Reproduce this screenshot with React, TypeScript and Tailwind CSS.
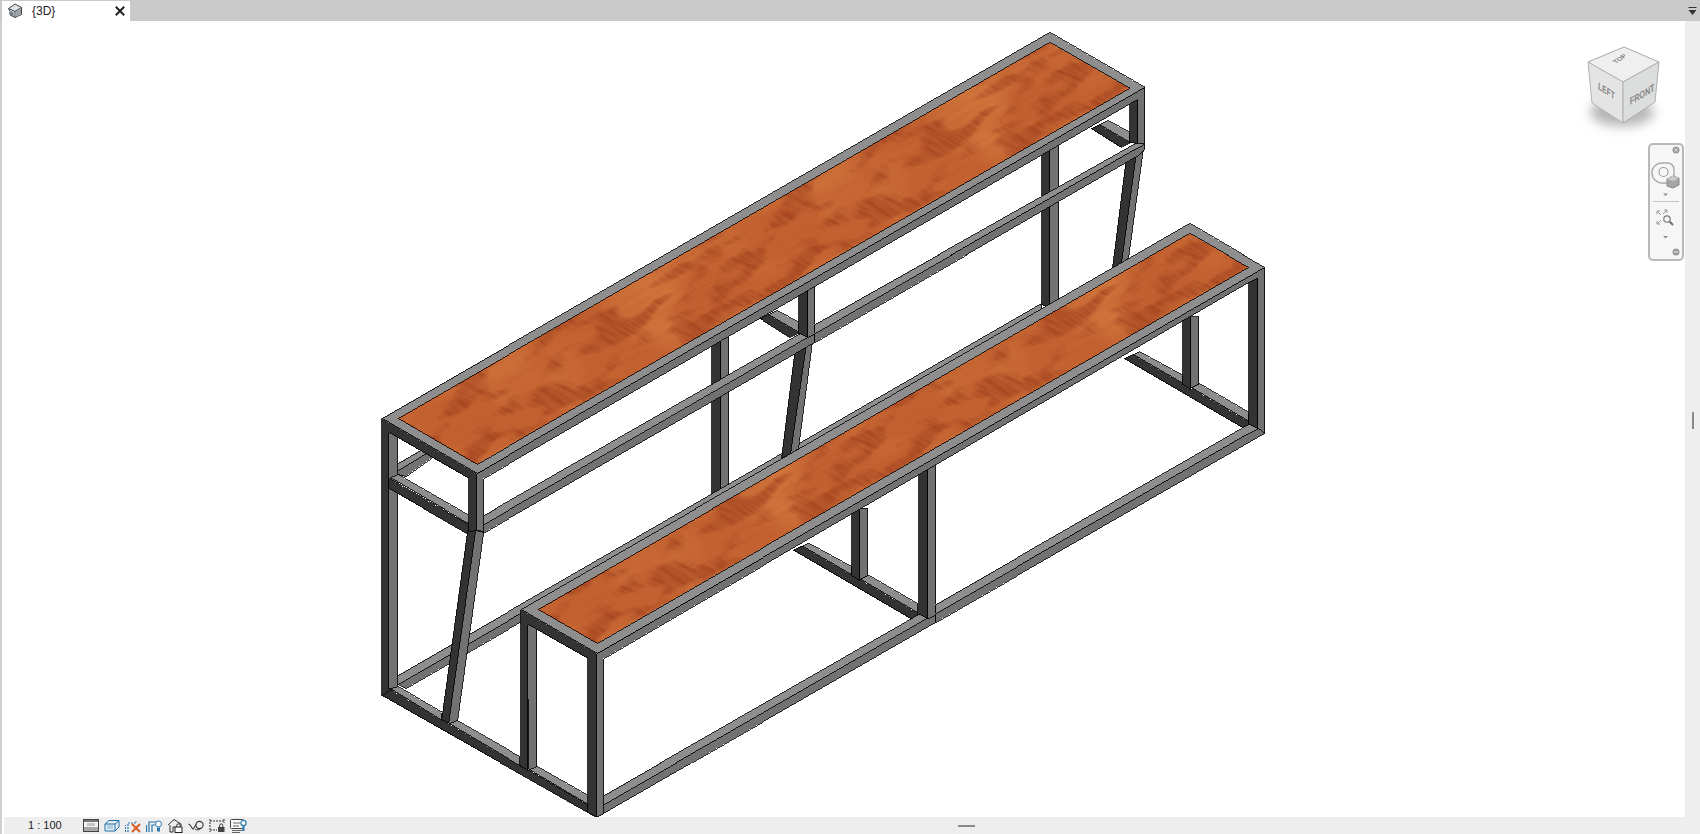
import React from 'react';

const LIGHT = '#8e8e8e';
const MID = '#727272';
const DARK = '#333333';

const railTop = (x: number) => 515 - (x - 483) * 0.576;
const backTop = (x: number) => 675 - (x - 397) * 0.578;
const baseTop = (x: number) => 795 - (x - 603.3) * 0.575;

type Pt = [number, number];

// snap to the pixel grid so neighbouring faces share one black line
const Face = ({ pts, fill }: { pts: Pt[]; fill: string }) => (
  <polygon
    points={pts.map((p) => `${Math.round(p[0]) + 0.5},${Math.round(p[1]) + 0.5}`).join(' ')}
    fill={fill}
    stroke="#000"
    strokeWidth={0.8}
    shapeRendering="crispEdges"
  />
);

// upper cross rail + lower cross rail get reused for the middle frame
const UpperCross = () => (
  <>
    <Face fill={DARK} pts={[[1090, 128.3], [1098.3, 124.3], [1129, 142], [1120, 147]]} />
    <Face fill={LIGHT} pts={[[1098.3, 124], [1106.7, 120], [1129, 131.7], [1129, 141.5]]} />
  </>
);

const LowerCross = () => (
  <>
    <Face fill={DARK} pts={[[1123.3, 358.3], [1131.7, 354], [1248.3, 421], [1248.3, 431]]} />
    <Face fill={LIGHT} pts={[[1131.7, 354], [1138, 351], [1181.7, 375], [1181.7, 382.7]]} />
    <Face fill={LIGHT} pts={[[1190, 386.7], [1197.7, 383.3], [1248.3, 411.7], [1248.3, 420.7]]} />
    <Face fill={DARK} pts={[[1181.7, 316], [1190, 316], [1190, 389], [1181.7, 384]]} />
    <Face fill={MID} pts={[[1190, 316], [1197.7, 316], [1197.7, 383.3], [1190, 386.7]]} />
  </>
);

const WoodDefs = () => (
  <defs>
    <filter id="plaid" x="0" y="0" width="1" height="1" colorInterpolationFilters="sRGB">
      <feTurbulence type="fractalNoise" baseFrequency="0.2 0.03" numOctaves={2} seed={7} stitchTiles="stitch" result="fine" />
      <feColorMatrix in="fine" values="0 0 0 0 0.66  0 0 0 0 0.28  0 0 0 0 0.13  2.8 0 0 0 -1.05" result="streak" />
      <feTurbulence type="fractalNoise" baseFrequency="0.022 0.05" numOctaves={2} seed={12} stitchTiles="stitch" result="big" />
      <feColorMatrix in="big" values="0 0 0 0 0  0 0 0 0 0  0 0 0 0 0  5.5 0 0 0 -2.6" result="mask" />
      <feComposite in="streak" in2="mask" operator="in" />
    </filter>
    <filter id="blotches" x="0" y="0" width="1" height="1" colorInterpolationFilters="sRGB">
      <feTurbulence type="fractalNoise" baseFrequency="0.022 0.05" numOctaves={2} seed={12} stitchTiles="stitch" />
      <feColorMatrix values="0 0 0 0 0.68  0 0 0 0 0.31  0 0 0 0 0.15  5 0 0 0 -2.4" />
    </filter>
    <filter id="glow" x="0" y="0" width="1" height="1" colorInterpolationFilters="sRGB">
      <feTurbulence type="fractalNoise" baseFrequency="0.012 0.02" numOctaves={2} seed={31} stitchTiles="stitch" />
      <feColorMatrix values="0 0 0 0 0.81  0 0 0 0 0.45  0 0 0 0 0.23  3.4 0 0 0 -1.5" />
    </filter>
    <filter id="lines" x="0" y="0" width="1" height="1" colorInterpolationFilters="sRGB">
      <feTurbulence type="fractalNoise" baseFrequency="0.012 0.4" numOctaves={1} seed={3} stitchTiles="stitch" />
      <feColorMatrix values="0 0 0 0 0.68  0 0 0 0 0.31  0 0 0 0 0.15  1.6 0 0 0 -0.75" />
    </filter>
    <pattern id="woodTop" patternUnits="userSpaceOnUse" width={376} height={120} patternTransform="matrix(0.866 -0.5 -0.866 -0.5 476 464)">
      <WoodTile />
    </pattern>
    <pattern id="woodLow" patternUnits="userSpaceOnUse" width={376} height={120} patternTransform="matrix(0.866 -0.5 -0.866 -0.5 596 643)">
      <WoodTile />
    </pattern>
  </defs>
);

const WoodTile = () => (
  <>
    <rect width={376} height={120} fill="#c36230" />
    <rect width={376} height={120} filter="url(#glow)" />
    <rect width={376} height={120} filter="url(#blotches)" opacity={0.65} />
    <rect width={376} height={120} filter="url(#plaid)" />
    <rect width={376} height={120} filter="url(#lines)" opacity={0.4} />
    <ellipse cx={300} cy={36} rx={32} ry={11} fill="none" stroke="#ad5227" strokeWidth={1} opacity={0.6} />
    <ellipse cx={302} cy={36} rx={20} ry={6} fill="none" stroke="#b55a2a" strokeWidth={1} opacity={0.45} />
    <path d="M90 22 q26 -8 48 2" fill="none" stroke="#ad5227" strokeWidth={1} opacity={0.6} />
  </>
);

const Bench = () => (
  <svg viewBox="2 21 1683 796" width={1683} height={796} className="block">
    <WoodDefs />

    {/* back of the upper frame */}
    <Face fill={DARK} pts={[[711, 280], [720, 280], [720, 500], [711, 500]]} />
    <Face fill={MID} pts={[[720, 280], [727.7, 280], [727.7, 500], [720, 500]]} />
    <Face fill={LIGHT} pts={[[397, backTop(397)], [1041, backTop(1041)], [1041, backTop(1041) + 9], [397, backTop(397) + 9]]} />
    <Face fill={MID} pts={[[397, backTop(397) + 9], [1041, backTop(1041) + 9], [1041, backTop(1041) + 18], [405, backTop(405) + 18]]} />
    <Face fill={DARK} pts={[[1041, 140], [1049.3, 140], [1049.3, 309], [1041, 304]]} />
    <Face fill={MID} pts={[[1049.3, 140], [1057.7, 140], [1057.7, 305], [1049.3, 309]]} />
    <Face fill={LIGHT} pts={[[396.7, 463.3], [440, 438.3], [440, 444], [396.7, 469.5]]} />
    <Face fill={MID} pts={[[396.7, 469.5], [440, 444], [440, 451], [405, 476], [396.7, 474]]} />

    {/* tapered legs, middle and far */}
    <Face fill={DARK} pts={[[795, 345], [805.5, 342], [790, 453], [781, 457]]} />
    <Face fill={MID} pts={[[805.5, 342], [812.3, 340], [798.3, 447], [790, 453]]} />
    <Face fill={DARK} pts={[[1125.7, 155], [1135.7, 150], [1120.7, 262], [1111.7, 267]]} />
    <Face fill={MID} pts={[[1135.7, 150], [1143.3, 147], [1128.3, 257], [1120.7, 262]]} />

    {/* long middle rail, left half */}
    <Face fill={LIGHT} pts={[[476, railTop(476)], [806.7, railTop(806.7)], [806.7, railTop(806.7) + 9], [476, railTop(476) + 9]]} />
    <Face fill={MID} pts={[[476, railTop(476) + 9], [814.3, railTop(814.3) + 9], [814.3, railTop(814.3) + 17.5], [482, railTop(482) + 17.5]]} />

    <g transform="translate(-331 190)">
      <UpperCross />
    </g>
    <UpperCross />

    {/* middle frame post */}
    <Face fill={DARK} pts={[[798.3, 285], [806.7, 285], [806.7, 337], [798.3, 333]]} />
    <Face fill={MID} pts={[[806.7, 285], [814.3, 285], [814.3, 333], [806.7, 337]]} />
    <Face fill={DARK} pts={[[1129.3, 95], [1137.3, 95], [1137.3, 143], [1129.3, 142]]} />

    {/* upper top */}
    <Face fill={MID} pts={[[388.3, 431.5], [396.7, 436.5], [396.7, 686], [388.3, 688.5]]} />
    <Face fill={MID} pts={[[476, 473], [1144.3, 87], [1144.3, 148], [1137.3, 148], [1137.3, 98.5], [483.3, 478], [483.3, 531], [476, 529.5]]} />

    {/* long middle rail, right half */}
    <Face fill={LIGHT} pts={[[814.3, railTop(814.3)], [1135, 142.5], [1144.3, 143], [1135.7, railTop(1135.7) + 9], [814.3, railTop(814.3) + 9]]} />
    <Face fill={MID} pts={[[814.3, railTop(814.3) + 9], [1135.7, railTop(1135.7) + 9], [1144.3, 143], [1143.5, 148], [1135.7, 156], [814.3, railTop(814.3) + 17.5]]} />

    <Face fill={DARK} pts={[[381, 418], [476, 473], [476, 532], [468.3, 532], [468.3, 477.5], [388.3, 431.5], [388.3, 688], [396, 695], [381, 695]]} />
    <Face fill={LIGHT} pts={[[381, 418], [1049, 32], [1144.3, 87], [476, 473]]} />
    <Face fill="url(#woodTop)" pts={[[396.7, 418.3], [1049.3, 41.7], [1129, 88.3], [476, 464]]} />

    {/* front cross rail of the upper frame */}
    <Face fill={LIGHT} pts={[[389, 476.7], [396.7, 474.3], [468.3, 515], [468.3, 523.3]]} />
    <Face fill={DARK} pts={[[388.3, 477.5], [468.3, 523.5], [468.3, 534], [388.3, 487.5]]} />

    {/* front tapered leg */}
    <Face fill={DARK} pts={[[466.5, 531], [475, 530], [448.3, 723], [440.7, 720]]} />
    <Face fill={MID} pts={[[475, 530], [482.5, 532], [456.7, 720], [448.3, 723]]} />

    {/* bottom left-front rail */}
    <Face fill={DARK} pts={[[381, 695], [389, 688.5], [587.3, 804], [596, 817]]} />
    <Face fill={LIGHT} pts={[[389.3, 688.3], [396.7, 686], [440.7, 711.7], [440.7, 720]]} />
    <Face fill={LIGHT} pts={[[448.3, 723.3], [456, 720], [519.3, 755.7], [519.3, 765]]} />

    {/* lower bench, inner frames */}
    <g transform="translate(-331 191.5)">
      <LowerCross />
    </g>
    <LowerCross />

    <Face fill={LIGHT} pts={[[603.3, baseTop(603.3)], [926.7, baseTop(926.7)], [926.7, baseTop(926.7) + 9], [603.3, baseTop(603.3) + 9]]} />
    <Face fill={MID} pts={[[603.3, baseTop(603.3) + 9], [935, baseTop(935) + 9], [935, baseTop(935) + 18], [596, 817]]} />
    <Face fill={DARK} pts={[[918.3, 465], [926.7, 465], [926.7, 618], [918.3, 613.5]]} />
    <Face fill={MID} pts={[[926.7, 465], [935, 465], [935, 614], [926.7, 618]]} />
    <Face fill={DARK} pts={[[1248.3, 275], [1256.7, 275], [1256.7, 430], [1248.3, 425]]} />
    <Face fill={LIGHT} pts={[[935, baseTop(935)], [1248.3, baseTop(1248.3)], [1256.7, 428], [1248.3, baseTop(1248.3) + 9], [935, baseTop(935) + 9]]} />
    <Face fill={MID} pts={[[935, baseTop(935) + 9], [1248.3, baseTop(1248.3) + 9], [1256.7, 428], [1264.3, 433], [935, baseTop(935) + 18]]} />

    {/* lower bench, outer shell */}
    <Face fill={MID} pts={[[527.3, 624], [535.7, 629.3], [535.7, 766], [528.3, 769]]} />
    <Face fill={MID} pts={[[595.7, 652.7], [1264.3, 266.7], [1264.3, 433], [1256.7, 428], [1256.7, 277], [1248.3, 281.7], [603.3, 658.3], [603.3, 812.5], [595.7, 817]]} />
    <Face fill={DARK} pts={[[520, 609.3], [595.7, 652.7], [595.7, 817], [587.3, 812], [587.3, 658.3], [527.3, 624], [527.3, 770], [520, 766]]} />
    <Face fill={LIGHT} pts={[[528.3, 769], [535.7, 766], [587.3, 795], [587.3, 804]]} />
    <Face fill={LIGHT} pts={[[520, 609.3], [1189.3, 223.3], [1264.3, 266.7], [595.7, 652.7]]} />
    <Face fill="url(#woodLow)" pts={[[536.7, 609.3], [1189.3, 232.7], [1248.3, 267.3], [595.7, 643.3]]} />
  </svg>
);

const ViewCube = () => (
  <svg width={90} height={100} viewBox="1580 40 90 100" className="absolute left-[1578px] top-[19px]">
    <defs>
      <filter id="cubeShadow" x="-50%" y="-50%" width="200%" height="200%">
        <feGaussianBlur stdDeviation="6" />
      </filter>
    </defs>
    <ellipse cx={1622} cy={112} rx={32} ry={14} fill="#9a9a9a" opacity={0.75} filter="url(#cubeShadow)" />
    <polygon points="1624,47 1659,62 1623,82 1588,62" fill="#efefef" stroke="#a8a8a8" />
    <polygon points="1588,62 1623,82 1623,123 1592,103" fill="#e4e4e4" stroke="#b4b4b4" />
    <polygon points="1659,62 1623,82 1623,123 1655,102" fill="#dcdddd" stroke="#b0b0b0" />
    <text transform="matrix(0.66 0.42 -0.06 1 1598 89)" fontFamily="'Liberation Sans', sans-serif" fontSize={10} fontWeight={700} fill="#858585">LEFT</text>
    <text transform="matrix(0.72 -0.42 0.06 1 1630 105)" fontFamily="'Liberation Sans', sans-serif" fontSize={10} fontWeight={700} fill="#858585">FRONT</text>
    <text transform="matrix(0.55 -0.38 0.55 0.38 1616 64)" fontFamily="'Liberation Sans', sans-serif" fontSize={10} fontWeight={700} fill="#858585">TOP</text>
  </svg>
);

const NavBar = () => (
  <div className="absolute left-[1646px] top-[122px] w-[36px] h-[118px] rounded-[5px] border-2 border-[#b6baba] bg-[#f6f6f6] flex flex-col items-center">
    <svg width={32} height={114} viewBox="0 0 32 114">
      <circle cx={26} cy={5} r={3.5} fill="#9a9a9a" />
      <path d="M24.4 3.4l3.2 3.2M27.6 3.4l-3.2 3.2" stroke="#eee" strokeWidth={0.8} />
      <path d="M17 38H12a10 10 0 0 1-10-10v-2a10 10 0 0 1 10-8h6a7 7 0 0 1 6 6v7" fill="none" stroke="#a9a9a9" strokeWidth={1.4} />
      <circle cx={13.5} cy={27} r={4.5} fill="#f8f8f8" stroke="#a0a0a0" strokeWidth={1.2} />
      <polygon points="17,34 23,31 29,33 29,40 23,43 17,41" fill="#a6a6a6" stroke="#8a8a8a" />
      <polygon points="17,34 23,31 29,33 23,36" fill="#cbcbcb" />
      <polygon points="13,48.5 18,48.5 15.5,51" fill="#8c8c8c" />
      <line x1={3} y1={56.5} x2={29} y2={56.5} stroke="#c4c4c4" />
      <path d="M7 66l4 4M7 66h3M7 66v3M17 65l-4 4M17 65h-3M17 65v3M7 79l4-4M7 79h3M7 79v-3" fill="none" stroke="#9a9a9a" />
      <circle cx={17} cy={74} r={3.2} fill="#f5f5f5" stroke="#7c7c7c" strokeWidth={1.2} />
      <line x1={19.5} y1={76.5} x2={23} y2={80} stroke="#6c6c6c" strokeWidth={2} />
      <polygon points="13,91 18,91 15.5,93.5" fill="#8c8c8c" />
      <circle cx={26} cy={107} r={3.5} fill="#9a9a9a" />
      <line x1={24} y1={107} x2={28} y2={107} stroke="#eee" />
    </svg>
  </div>
);

const StatusIcons = () => (
  <div className="flex items-center gap-[5px]">
    <svg width={16} height={15} viewBox="0 0 16 15">
      <rect x={0.5} y={1.5} width={15} height={12} fill="#f4f4f4" stroke="#444" />
      <rect x={1} y={2} width={14} height={2} fill="#777" />
      <rect x={4} y={5} width={8} height={3} fill="#c5c5c5" />
      <rect x={1} y={9} width={14} height={4} fill="#a8a8a8" />
    </svg>
    <svg width={16} height={15} viewBox="0 0 16 15">
      <path d="M1 6l4-3.5h10v6.5l-4 4H1z" fill="#e6eef5" stroke="#1f6fa8" />
      <path d="M1 6h10v7M11 6l4-3.5" fill="none" stroke="#1f6fa8" />
      <path d="M3 8h6M3 10h6" stroke="#7fb0d0" />
    </svg>
    <svg width={16} height={15} viewBox="0 0 16 15">
      <path d="M0.5 14V7M3 14V5h8V3" fill="none" stroke="#2a78ad" strokeWidth={1.2} strokeDasharray="2 1" />
      <path d="M7 6l8 8M15 6l-8 8" stroke="#d9622b" strokeWidth={2.2} />
    </svg>
    <svg width={16} height={15} viewBox="0 0 16 15">
      <path d="M0.5 14V7M3 14V4h7M6 14V7h3" fill="none" stroke="#2a78ad" strokeWidth={1.2} />
      <circle cx={12.5} cy={6} r={3} fill="#fff" stroke="#2a78ad" />
      <rect x={11} y={9.5} width={3} height={4} fill="#2a78ad" />
    </svg>
    <svg width={16} height={15} viewBox="0 0 16 15">
      <path d="M1 7l6-5.5L14 6v2M3 7v7h3V9h2" fill="#eee" stroke="#333" />
      <rect x={8} y={9} width={7} height={5.5} fill="#fff" stroke="#222" />
      <path d="M9.8 9V7.4a1.7 1.7 0 0 1 3.4 0V9" fill="none" stroke="#222" />
    </svg>
    <svg width={16} height={15} viewBox="0 0 16 15">
      <path d="M0.5 6c2 0 2 3 4.5 5 1.5-1 2-3 3-4.5" fill="none" stroke="#333" strokeWidth={1.1} />
      <circle cx={11.5} cy={7} r={3.6} fill="none" stroke="#333" strokeWidth={1.1} />
      <path d="M7 11c2 1.5 4 1 5.5-.5" fill="none" stroke="#333" />
    </svg>
    <svg width={16} height={15} viewBox="0 0 16 15">
      <path d="M1 1v13M15 1v4M1 3h14M1 12h7" fill="none" stroke="#333" strokeDasharray="2 1" />
      <rect x={9} y={9} width={6.5} height={5} fill="#444" />
      <path d="M10.6 9V7.5a1.6 1.6 0 0 1 3.2 0V9" fill="none" stroke="#333" />
    </svg>
    <svg width={17} height={15} viewBox="0 0 17 15">
      <rect x={0.5} y={1.5} width={13} height={9} rx={1} fill="#f8f8f8" stroke="#444" />
      <path d="M2 12.5h11M2 14.5h8M3 5h7M3 8h6" stroke="#666" />
      <circle cx={13.5} cy={5} r={2.6} fill="#fff" stroke="#2a78ad" strokeWidth={1.2} />
      <rect x={12.5} y={8} width={2} height={5} fill="#2a78ad" />
    </svg>
  </div>
);

const App: React.FC = () => {
  return (
    <div className="w-[1700px] h-[834px] overflow-hidden bg-white flex flex-col font-['Liberation_Sans',sans-serif] text-[#222]">
      {/* tab strip */}
      <div className="h-[21px] bg-[#c9c9c9] flex items-end justify-between pl-[2px] pr-[3px] shrink-0">
        <div className="w-[128px] h-[20px] bg-white flex items-center">
          <svg width={16} height={15} viewBox="0 0 16 15" className="ml-[5px] mb-[1px]">
            <path d="M1.5 5.5L8 1l6.5 3.5v7L8 14.5 3 12V8.5L1.5 5.5z" fill="#dfe3e6" stroke="#3d4247" />
            <path d="M1.5 5.5L8 8.5l6.5-4M8 8.5v6" fill="none" stroke="#3d4247" />
            <path d="M3.5 8l3 1.5v4L3.5 12z" fill="#6f7a82" />
            <path d="M8.5 9l5.5-3.5v5L8.5 14z" fill="#9aa2a8" />
          </svg>
          <span className="ml-[9px] text-[12px] leading-none">{'{3D}'}</span>
          <svg width={10} height={10} viewBox="0 0 10 10" className="ml-auto mr-[5px]">
            <path d="M0.8 0.8l8.4 8.4M9.2 0.8L0.8 9.2" stroke="#222" strokeWidth={2} />
          </svg>
        </div>
        <svg width={9} height={9} viewBox="0 0 9 9" className="mb-[5px]">
          <rect x={0.5} y={0} width={8} height={1} fill="#333" />
          <polygon points="0.5,3 8.5,3 4.5,8" fill="#333" />
        </svg>
      </div>

      {/* view */}
      <div className="flex h-[796px] shrink-0">
        <div className="w-[2px] bg-[#cfcfcf]" />
        <div className="relative w-[1683px]">
          <Bench />
          <ViewCube />
          <NavBar />
        </div>
        <div className="flex-1 bg-[#eeeeee] flex items-center justify-center">
          <div className="w-[2px] h-[17px] mt-[3px] bg-[#8a8a8a]" />
        </div>
      </div>

      {/* status bar */}
      <div className="flex flex-1">
        <div className="w-[2px] bg-[#cfcfcf]" />
        <div className="w-[2px] bg-white" />
        <div className="relative flex-1 bg-[#eeeeee] flex items-center">
          <span className="ml-[24px] w-[55px] text-[11px] leading-none">1 : 100</span>
          <StatusIcons />
          <div className="absolute left-[954px] top-[8px] w-[17px] h-[2px] bg-[#8a8a8a]" />
        </div>
      </div>
    </div>
  );
};

export default App;
